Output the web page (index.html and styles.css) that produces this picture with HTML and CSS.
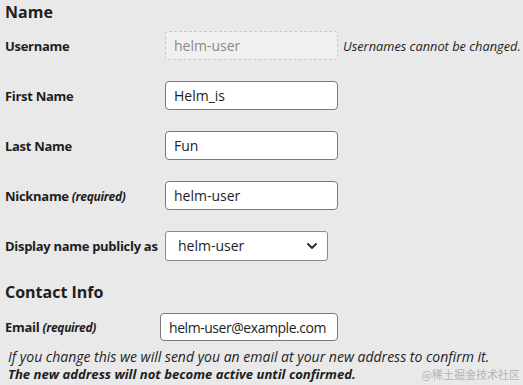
FILE: index.html
```html
<!DOCTYPE html>
<html>
<head>
<meta charset="utf-8">
<link rel="stylesheet" href="styles.css">
</head>
<body>
<div class="page">
  <h2 class="heading">Name</h2>
  <div class="rows">
    <div class="row">
      <label class="label">Username</label>
      <input class="field disabled" value="helm-user" disabled>
      <span class="note">Usernames cannot be changed.</span>
    </div>
    <div class="row">
      <label class="label">First Name</label>
      <input class="field" value="Helm_is">
    </div>
    <div class="row">
      <label class="label">Last Name</label>
      <input class="field" value="Fun">
    </div>
    <div class="row">
      <label class="label">Nickname <em class="req">(required)</em></label>
      <input class="field" value="helm-user">
    </div>
    <div class="row">
      <label class="label">Display name publicly as</label>
      <div class="select">
        <span class="select-text">helm-user</span>
        <svg class="chev" width="12" height="8" viewBox="0 0 12 8"><path d="M1.5 1.5 L6 6 L10.5 1.5" fill="none" stroke="#222" stroke-width="1.8"/></svg>
      </div>
    </div>
  </div>
  <h2 class="heading contact">Contact Info</h2>
  <div class="row email-row">
    <label class="label email-label">Email <em class="req">(required)</em></label>
    <input class="field email" value="helm-user@example.com">
  </div>
  <p class="desc">If you change this we will send you an email at your new address to confirm it.<br><strong>The new address will not become active until confirmed.</strong></p>
  <div class="watermark">@稀土掘金技术社区</div>
</div>
</body>
</html>
```
FILE: styles.css
```css
html, body {
  margin: 0;
  padding: 0;
  background: #e9e9e9;
  width: 523px;
  height: 385px;
  overflow: hidden;
}
.page {
  position: relative;
  height: 385px;
  padding: 0 0 0 5px;
  font-family: "Open Sans", "Noto Sans", sans-serif;
  color: #1e1e1e;
}
.heading {
  margin: 0;
  padding-top: 1px;
  font-size: 16px;
  font-weight: 700;
  line-height: 22px;
}
.rows {
  display: flex;
  flex-direction: column;
  gap: 21px;
  margin-top: 8px;
}
.row {
  display: flex;
  align-items: center;
  height: 29px;
}
.label {
  flex: none;
  width: 160px;
  font-size: 13px;
  font-weight: 700;
  letter-spacing: -0.3px;
}
.req {
  font-size: 12px;
  font-weight: 700;
  font-style: italic;
}
.field {
  flex: none;
  box-sizing: border-box;
  width: 173px;
  height: 29px;
  border: 1px solid #7a7a7a;
  border-radius: 4px;
  background: #fff;
  padding: 0 8px;
  font-family: "Open Sans", "Noto Sans", sans-serif;
  font-size: 14px;
  color: #1e1e1e;
  outline: none;
}
.disabled {
  border: 1px dashed #c8c8c8;
  background: #f0f0f0;
  color: #8a8a8a;
}
.note {
  flex: none;
  margin-left: 5px;
  font-size: 12.8px;
  font-style: italic;
  white-space: nowrap;
}
.select {
  box-sizing: border-box;
  width: 163px;
  height: 30px;
  border: 1px solid #8a8a8a;
  border-radius: 3px;
  background: #fff;
  display: flex;
  align-items: center;
  justify-content: space-between;
  padding: 0 9px 0 12px;
  font-size: 14px;
}
.contact {
  margin-top: 20px;
}
.email-row {
  margin-top: 10px;
  height: 28px;
}
.email-label {
  width: 155px;
}
.email {
  width: 178px;
  height: 28px;
  letter-spacing: -0.45px;
}
.desc {
  margin: 7px 0 0 3px;
  font-size: 14px;
  font-style: italic;
  line-height: 17px;
  white-space: nowrap;
}
.desc strong {
  font-size: 13.1px;
  font-weight: 700;
}
.watermark {
  position: absolute;
  right: 3px;
  bottom: 3px;
  font-family: "Noto Sans CJK SC", sans-serif;
  font-size: 11px;
  color: #b4b4b4;
}
```
